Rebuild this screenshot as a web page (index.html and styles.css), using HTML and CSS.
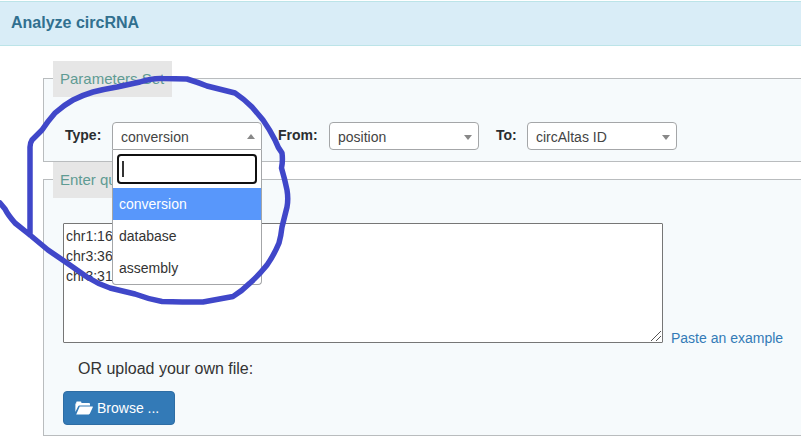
FILE: index.html
```
<!DOCTYPE html>
<html lang="en">
<head>
<meta charset="utf-8">
<title>Analyze circRNA</title>
<link rel="stylesheet" href="styles.css">
</head>
<body>
<header class="panel-heading">Analyze circRNA</header>
<main class="panel-body">
  <fieldset class="group parameters">
    <legend class="group-title">Parameters Set</legend>
    <div class="fields">
      <span class="label label-type">Type:</span>
      <div class="select open">
        <span>conversion</span><i class="arrow up"></i>
        <div class="dropdown">
          <div class="search"><i class="caret"></i></div>
          <div class="option active">conversion</div>
          <div class="option">database</div>
          <div class="option">assembly</div>
        </div>
      </div>
      <span class="label label-from">From:</span>
      <div class="select"><span>position</span><i class="arrow"></i></div>
      <span class="label label-to">To:</span>
      <div class="select"><span>circAltas ID</span><i class="arrow"></i></div>
    </div>
  </fieldset>
  <fieldset class="group query">
    <legend class="group-title">Enter query</legend>
    <div class="query-row">
      <div class="query-input">chr1:16<br>chr3:36<br>chr3:31
        <svg class="grip" viewBox="0 0 12 12"><path d="M1 11 11 1M6 11l5-5"/></svg>
      </div>
      <a class="example">Paste an example</a>
    </div>
    <p class="upload-text">OR upload your own file:</p>
    <button class="browse" type="button">
      <svg class="folder" viewBox="0 0 18 14"><path d="M.4 11V2.600H1.200V1.400Q1.200.6 2 .6H5.600Q6.400.6 6.400 1.400V1.900H14Q15 1.900 15 2.900V4.500H4.400Q3.600 4.500 3.200 5.300z"/><path d="M4.700 5.400H17.300Q18.200 5.400 17.800 6.200L14.900 12.600Q14.500 13.400 13.700 13.400H1.200z"/></svg>
      Browse ...
    </button>
  </fieldset>
</main>
<svg class="annotation" viewBox="0 0 801 437">
  <path d="M30 235V147Q30 143 32 140L42 130Q48 121 55 113Q64 105 73 100Q83 95 93 92Q105 89 117 87L140 82Q152 78 163 78.500L187 79Q197 82 207 86L235 93Q244 99 252 107L263 120Q270 130 275 140Q278 148 282 153Q283 161 281.500 168Q285 180 287 190Q288.500 199 287 207L282 227Q281 236 279 243Q274 255 267 265Q259 275 250 283Q242 291 233 296.500L203 302Q182 302 162 301.500Q148 299 135 294L110 288Q98 284 87 277L67 263L48 250L30 235L15 223Q8 215 5 209L0 203"/>
</svg>
</body>
</html>
```
FILE: styles.css
```
* { box-sizing: border-box; }

body {
  margin: 0;
  padding-top: 1px;
  height: 437px;
  overflow: hidden;
  background: #fff;
  color: #333;
  font: 14px/20px "Liberation Sans", Arial, sans-serif;
}

.panel-heading {
  height: 45px;
  padding: 11px;
  border: solid #bce4e8;
  border-width: 1px 0;
  background: #d9edf7;
  color: #31708f;
  font-size: 16px;
  font-weight: bold;
}

.panel-body { padding: 15px 0 0 43px; }

.group {
  min-width: 0;
  width: 780px;
  margin: 0;
  padding: 0 0 0 9px;
  border: 1px solid #b9bcbe;
  background: #f6fafc;
}

.parameters { height: 101px; }
.query { height: 274px; }

.group-title {
  height: 35px;
  margin: 0;
  padding: 8px 7px 7px;
  background: #e6e6e6;
  box-shadow: 0 1px #e6e6e6;
  color: #5f9b93;
  font-size: 15px;
}

.parameters .group-title { width: 119px; }

.fields {
  display: flex;
  padding: 26px 0 0 12px;
}

.label {
  flex: none;
  padding-top: 3px;
  font-weight: bold;
  color: #2a2d30;
}

.label-type { width: 47px; }
.label-from { width: 51px; margin-left: 16px; }
.label-to { width: 31px; margin-left: 17px; }

.select {
  position: relative;
  display: flex;
  flex: none;
  align-items: center;
  justify-content: space-between;
  width: 150px;
  height: 28px;
  padding: 2px 6px 0 8px;
  border: 1px solid #a4a6a8;
  border-radius: 4px;
  background: #fff;
  color: #444;
}

.select.open { border-radius: 4px 4px 0 0; }

.arrow {
  border: solid transparent;
  border-width: 5px 4px 0;
  border-top-color: #888;
}

.arrow.up {
  margin-top: -2px;
  border-width: 0 4px 5px;
  border-bottom-color: #888;
}

.dropdown {
  position: absolute;
  z-index: 1;
  top: 27px;
  left: -1px;
  width: 150px;
  height: 135px;
  padding-top: 4px;
  border: 1px solid #a4a6a8;
  border-top: 0;
  border-radius: 0 0 4px 4px;
  background: #fff;
  color: #333;
}

.search {
  width: 140px;
  height: 30px;
  margin: 0 4px 4px;
  padding: 5px 3px;
  border: 2px solid #101010;
  border-radius: 4px;
}

.caret {
  display: block;
  width: 2px;
  height: 16px;
  background: #333;
}

.option {
  height: 32px;
  padding: 6px;
}

.active {
  background: #5897fb;
  color: #fff;
}

.query-row {
  display: flex;
  align-items: flex-end;
  padding: 26px 0 0 10px;
}

.query-input {
  position: relative;
  width: 600px;
  height: 120px;
  padding: 2px;
  border: 1px solid #767676;
  border-radius: 1px;
  background: #fff;
}

.grip {
  position: absolute;
  right: 0;
  bottom: 0;
  width: 12px;
  height: 12px;
  fill: none;
  stroke: #555;
  stroke-width: 1;
}

.example {
  margin: 0 0 -5px 8px;
  color: #337ab7;
}

.upload-text {
  margin: 16px 0 12px 25px;
  font-size: 16px;
}

.browse {
  display: flex;
  align-items: center;
  width: 112px;
  height: 34px;
  margin: 0 0 0 10px;
  padding: 0 11px;
  border: 1px solid #2e6da4;
  border-radius: 4px;
  background: #337ab7;
  color: #fff;
  font: inherit;
  white-space: nowrap;
}

.folder {
  flex: none;
  width: 18px;
  height: 14px;
  margin-right: 4px;
  fill: currentColor;
}

.annotation {
  position: absolute;
  z-index: 2;
  inset: 0;
  width: 801px;
  height: 437px;
  fill: none;
  stroke: #4047c9;
  stroke-width: 5.5;
  stroke-linecap: round;
  stroke-linejoin: round;
  pointer-events: none;
}
```
